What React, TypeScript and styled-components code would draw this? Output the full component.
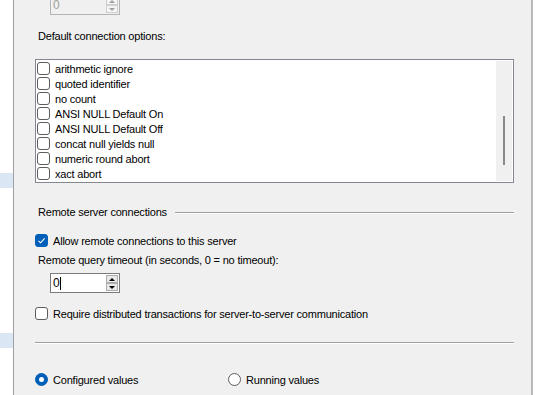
import React from "react";
import styled, { createGlobalStyle } from "styled-components";

const GlobalStyle = createGlobalStyle`
  body {
    margin: 0;
    background: #ffffff;
    font-family: "Liberation Sans", Arial, sans-serif;
    font-size: 11px;
    letter-spacing: -0.2px;
    color: #000000;
  }
`;

const Page = styled.div`
  display: flex;
  width: 557px;
  height: 395px;
  overflow: hidden;
`;

const SideStrip = styled.div`
  width: 13px;
  border-right: 1px solid #a0a0a0;
  background: #ffffff;
  display: flex;
  flex-direction: column;
`;

const Band = styled.div<{ $top: number }>`
  margin-top: ${(p) => p.$top}px;
  height: 15px;
  background: #dae6f3;
`;

const Panel = styled.div`
  width: 519px;
  background: #f0f0f0;
  border-right: 2px solid #b9b9bd;
  display: flex;
  flex-direction: column;
  padding-left: 21px;
  box-sizing: border-box;
`;

const Label = styled.div<{ $mt?: number; $ml?: number }>`
  margin-top: ${(p) => p.$mt ?? 0}px;
  margin-left: ${(p) => p.$ml ?? 3}px;
  height: 15px;
  line-height: 15px;
  white-space: nowrap;
`;

const Spinner = styled.div<{ $mt: number; $disabled?: boolean }>`
  margin-top: ${(p) => p.$mt}px;
  margin-left: 15px;
  width: 70px;
  height: 20px;
  box-sizing: border-box;
  border: 1px solid ${(p) => (p.$disabled ? "#b4b4b4" : "#7a7a7a")};
  background: ${(p) => (p.$disabled ? "#f0f0f0" : "#ffffff")};
  display: flex;
  align-items: center;
`;

const SpinValue = styled.div<{ $disabled?: boolean }>`
  flex: 1;
  padding-left: 2px;
  font-size: 12px;
  color: ${(p) => (p.$disabled ? "#a0a0a0" : "#000000")};
  display: flex;
  align-items: center;
`;

const Caret = styled.span`
  display: inline-block;
  width: 1px;
  height: 13px;
  background: #000;
  margin-left: 1px;
`;

const SpinButtons = styled.div`
  width: 12px;
  height: 16px;
  margin-right: 1px;
  display: flex;
  flex-direction: column;
`;

const SpinBtn = styled.div<{ $disabled?: boolean }>`
  flex: 1;
  border: 1px solid ${(p) => (p.$disabled ? "#d0d0d0" : "#adadad")};
  background: ${(p) => (p.$disabled ? "#f4f4f4" : "#e8e8e8")};
  display: flex;
  align-items: center;
  justify-content: center;
`;

const Arrow = styled.div<{ $up?: boolean; $disabled?: boolean }>`
  width: 0;
  height: 0;
  border-left: 3px solid transparent;
  border-right: 3px solid transparent;
  ${(p) =>
    p.$up
      ? `border-bottom: 3px solid ${p.$disabled ? "#a0a0a0" : "#000"};`
      : `border-top: 3px solid ${p.$disabled ? "#a0a0a0" : "#000"};`}
`;

const ListBox = styled.div`
  margin-top: 15px;
  width: 479px;
  height: 124px;
  box-sizing: border-box;
  border: 1px solid #828790;
  background: #ffffff;
  display: flex;
`;

const ListItems = styled.div`
  flex: 1;
  padding-top: 1px;
  display: flex;
  flex-direction: column;
`;

const ListRow = styled.div`
  height: 15px;
  padding-left: 1px;
  display: flex;
  align-items: center;
  white-space: nowrap;
`;

const Scroll = styled.div`
  width: 16px;
  margin: 1px 1px 1px 0;
  background: #f0f0f0;
  display: flex;
  justify-content: center;
`;

const Thumb = styled.div`
  margin-top: 55px;
  width: 2px;
  height: 49px;
  background: #8a8a8a;
`;

const Box = styled.span<{ $checked?: boolean }>`
  width: 13px;
  height: 13px;
  box-sizing: border-box;
  border-radius: 3px;
  border: 1px solid ${(p) => (p.$checked ? "#005fb8" : "#5d5d5d")};
  background: ${(p) => (p.$checked ? "#005fb8" : "#ffffff")};
  flex: none;
  display: flex;
  align-items: center;
  justify-content: center;
  margin-right: 5px;
`;

const Section = styled.div<{ $mt: number }>`
  margin-top: ${(p) => p.$mt}px;
  display: flex;
  align-items: center;
  height: 15px;
  width: 479px;
`;

const Rule = styled.div`
  flex: 1;
  height: 0;
  border-top: 1px solid #a0a0a0;
  border-bottom: 1px solid #ffffff;
  margin-left: 8px;
  margin-top: 1px;
`;

const CheckRow = styled.div<{ $mt: number }>`
  margin-top: ${(p) => p.$mt}px;
  height: 15px;
  display: flex;
  align-items: center;
  white-space: nowrap;
`;

const Separator = styled.div<{ $mt: number }>`
  margin-top: ${(p) => p.$mt}px;
  width: 479px;
  border-top: 1px solid #a0a0a0;
  border-bottom: 1px solid #ffffff;
`;

const RadioGroup = styled.div<{ $mt: number }>`
  margin-top: ${(p) => p.$mt}px;
  display: flex;
  height: 15px;
`;

const RadioOption = styled.div<{ $width?: number }>`
  width: ${(p) => (p.$width ? `${p.$width}px` : "auto")};
  display: flex;
  align-items: center;
  white-space: nowrap;
`;

const RadioDot = styled.span<{ $on?: boolean }>`
  width: 13px;
  height: 13px;
  box-sizing: border-box;
  border-radius: 50%;
  flex: none;
  margin-right: 5px;
  ${(p) =>
    p.$on
      ? `background: #005fb8; border: 1px solid #005fb8;`
      : `background: #ffffff; border: 1px solid #5d5d5d;`}
  display: flex;
  align-items: center;
  justify-content: center;
  &::after {
    content: "";
    display: ${(p) => (p.$on ? "block" : "none")};
    width: 5px;
    height: 5px;
    border-radius: 50%;
    background: #ffffff;
  }
`;

const Check = () => (
  <svg width="9" height="9" viewBox="0 0 9 9">
    <path d="M1.5 4.8 L3.6 6.8 L7.6 2.4" fill="none" stroke="#ffffff" strokeWidth="1.1" />
  </svg>
);

const options = [
  "arithmetic ignore",
  "quoted identifier",
  "no count",
  "ANSI NULL Default On",
  "ANSI NULL Default Off",
  "concat null yields null",
  "numeric round abort",
  "xact abort",
];

function SpinBox({ mt, disabled, value }: { mt: number; disabled?: boolean; value: string }) {
  return (
    <Spinner $mt={mt} $disabled={disabled}>
      <SpinValue $disabled={disabled}>
        {value}
        {!disabled && <Caret />}
      </SpinValue>
      <SpinButtons>
        <SpinBtn $disabled={disabled}>
          <Arrow $up $disabled={disabled} />
        </SpinBtn>
        <SpinBtn $disabled={disabled}>
          <Arrow $disabled={disabled} />
        </SpinBtn>
      </SpinButtons>
    </Spinner>
  );
}

export default function App() {
  return (
    <Page>
      <GlobalStyle />
      <SideStrip>
        <Band $top={173} />
        <Band $top={145} />
      </SideStrip>
      <Panel>
        <SpinBox mt={-5} disabled value="0" />
        <Label $mt={14}>Default connection options:</Label>
        <ListBox>
          <ListItems>
            {options.map((o) => (
              <ListRow key={o}>
                <Box />
                {o}
              </ListRow>
            ))}
          </ListItems>
          <Scroll>
            <Thumb />
          </Scroll>
        </ListBox>
        <Section $mt={22}>
          <Label>Remote server connections</Label>
          <Rule />
        </Section>
        <CheckRow $mt={13}>
          <Box $checked>
            <Check />
          </Box>
          Allow remote connections to this server
        </CheckRow>
        <Label $mt={5}>Remote query timeout (in seconds, 0 = no timeout):</Label>
        <SpinBox mt={5} value="0" />
        <CheckRow $mt={13}>
          <Box />
          Require distributed transactions for server-to-server communication
        </CheckRow>
        <Separator $mt={21} />
        <RadioGroup $mt={28}>
          <RadioOption $width={193}>
            <RadioDot $on />
            Configured values
          </RadioOption>
          <RadioOption>
            <RadioDot />
            Running values
          </RadioOption>
        </RadioGroup>
      </Panel>
    </Page>
  );
}
